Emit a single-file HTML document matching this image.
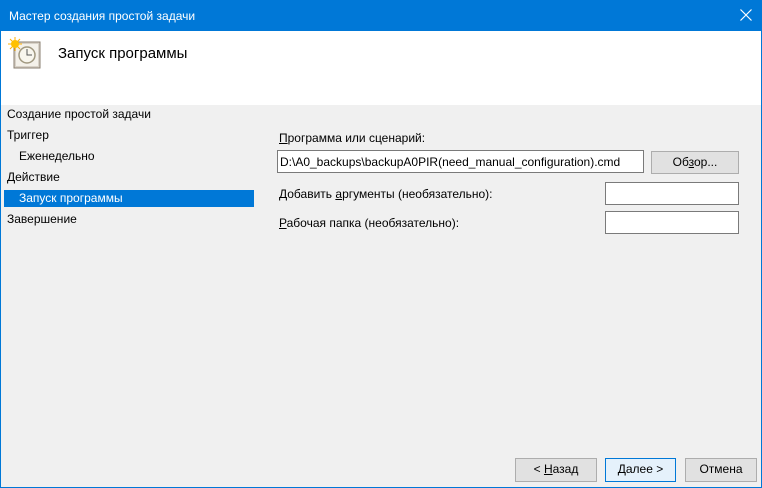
<!DOCTYPE html>
<html><head><style>
*{margin:0;padding:0;box-sizing:border-box}
body{width:762px;height:488px;overflow:hidden;font-family:"Liberation Sans",sans-serif;font-size:12px;color:#000;background:#f0f0f0;position:relative}
.win{position:absolute;left:0;top:0;width:762px;height:488px;border:1px solid #0078d7;background:#f0f0f0}
.title{position:absolute;left:0;top:0;width:762px;height:31px;background:#0078d7;color:#fff;font-size:12px}
.title span{position:absolute;left:9px;top:9px}
.hdr{position:absolute;left:1px;top:31px;width:760px;height:74px;background:#fff}
.a{position:absolute;white-space:nowrap}
.sel{position:absolute;left:4px;top:190px;width:250px;height:17px;background:#0078d7}
.in{position:absolute;background:#fff;border:1px solid #7a7a7a}
.btn{position:absolute;background:#e1e1e1;border:1px solid #adadad;text-align:center;line-height:21px}
</style></head><body>
<div class="win"></div>
<div class="title"><span>Мастер создания простой задачи</span>
<svg class="a" style="left:740px;top:9px" width="12" height="12"><path d="M0.5 0.5L11.5 11.5M11.5 0.5L0.5 11.5" stroke="#fff" stroke-width="1.2"/></svg></div>
<div class="hdr"></div>
<svg class="a" style="left:6px;top:37px" width="36" height="32" viewBox="0 0 36 32">
<rect x="8" y="5" width="26" height="26" fill="#d8d2c8" stroke="#8a7f70"/>
<rect x="10" y="7" width="22" height="22" fill="#f4f1ea"/>
<circle cx="21" cy="18" r="8" fill="#f8f6ee" stroke="#a09880" stroke-width="1.5"/>
<path d="M21 12v6h5" stroke="#555" fill="none"/>
<path d="M9 0v14M2 7h14M4 2l10 10M14 2l-10 10" stroke="#ffb000"/>
<circle cx="9" cy="7" r="4" fill="#ffc000"/>
</svg>
<div class="a" style="left:58px;top:45px;font-size:15px">Запуск программы</div>
<div class="sel"></div>
<div class="a" style="left:7px;top:107px">Создание простой задачи</div>
<div class="a" style="left:7px;top:128px">Триггер</div>
<div class="a" style="left:19px;top:149px">Еженедельно</div>
<div class="a" style="left:7px;top:170px">Действие</div>
<div class="a" style="left:19px;top:191px;color:#fff">Запуск программы</div>
<div class="a" style="left:7px;top:212px">Завершение</div>
<div class="a" style="left:279px;top:131px"><u>П</u>рограмма или сценарий:</div>
<div class="in" style="left:277px;top:150px;width:367px;height:23px"><span class="a" style="left:2px;top:4px">D:\A0_backups\backupA0PIR(need_manual_configuration).cmd</span></div>
<div class="btn" style="left:651px;top:151px;width:88px;height:23px">Об<u>з</u>ор...</div>
<div class="a" style="left:279px;top:187px">Добавить <u>а</u>ргументы (необязательно):</div>
<div class="in" style="left:605px;top:182px;width:134px;height:23px"></div>
<div class="a" style="left:279px;top:216px"><u>Р</u>абочая папка (необязательно):</div>
<div class="in" style="left:605px;top:211px;width:134px;height:23px"></div>
<div class="btn" style="left:515px;top:458px;width:82px;height:24px">&lt; <u>Н</u>азад</div>
<div class="btn" style="left:605px;top:458px;width:71px;height:24px;background:#e5f1fb;border:1px solid #0078d7"><u>Д</u>алее &gt;</div>
<div class="btn" style="left:685px;top:458px;width:72px;height:24px">Отмена</div>
</body></html>
